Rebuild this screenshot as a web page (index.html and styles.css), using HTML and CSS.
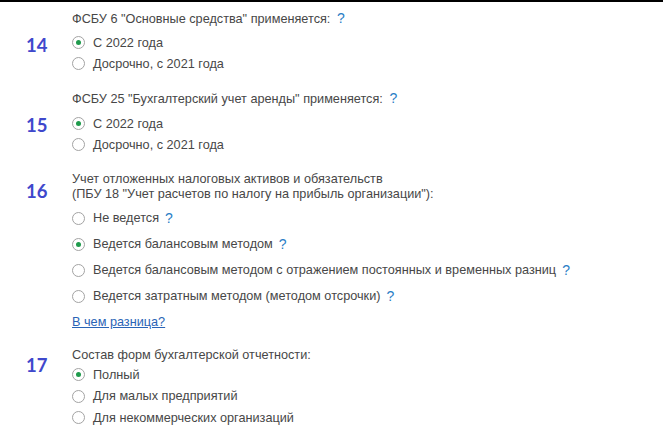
FILE: index.html
```html
<!DOCTYPE html>
<html lang="ru">
<head>
<meta charset="utf-8">
<link rel="stylesheet" href="styles.css">
</head>
<body>
<div class="page">
  <section class="sect s14">
    <div class="num">14</div>
    <div class="body">
      <div class="title">ФСБУ 6 "Основные средства" применяется: <span class="q">?</span></div>
      <div class="opts">
        <div class="opt"><span class="radio on"></span>С 2022 года</div>
        <div class="opt"><span class="radio"></span>Досрочно, с 2021 года</div>
      </div>
    </div>
  </section>
  <section class="sect s15">
    <div class="num">15</div>
    <div class="body">
      <div class="title">ФСБУ 25 "Бухгалтерский учет аренды" применяется: <span class="q">?</span></div>
      <div class="opts">
        <div class="opt"><span class="radio on"></span>С 2022 года</div>
        <div class="opt"><span class="radio"></span>Досрочно, с 2021 года</div>
      </div>
    </div>
  </section>
  <section class="sect s16">
    <div class="num">16</div>
    <div class="body">
      <div class="title two">Учет отложенных налоговых активов и обязательств<br>(ПБУ 18 "Учет расчетов по налогу на прибыль организации"):</div>
      <div class="opts wide">
        <div class="opt"><span class="radio"></span>Не ведется<span class="q">?</span></div>
        <div class="opt"><span class="radio on"></span>Ведется балансовым методом<span class="q">?</span></div>
        <div class="opt"><span class="radio"></span>Ведется балансовым методом с отражением постоянных и временных разниц<span class="q">?</span></div>
        <div class="opt"><span class="radio"></span>Ведется затратным методом (методом отсрочки)<span class="q">?</span></div>
      </div>
      <a class="link" href="#">В чем разница?</a>
    </div>
  </section>
  <section class="sect s17">
    <div class="num">17</div>
    <div class="body">
      <div class="title">Состав форм бухгалтерской отчетности:</div>
      <div class="opts">
        <div class="opt"><span class="radio on"></span>Полный</div>
        <div class="opt"><span class="radio"></span>Для малых предприятий</div>
        <div class="opt"><span class="radio"></span>Для некоммерческих организаций</div>
      </div>
    </div>
  </section>
</div>
</body>
</html>
```
FILE: styles.css
```css
html, body {
  margin: 0;
  padding: 0;
  background: #fff;
}
.page {
  width: 663px;
  height: 432px;
  border-top: 2px solid #000;
  font-family: "Liberation Sans", Arial, sans-serif;
  font-size: 12.7px;
  color: #474747;
  overflow: hidden;
}
.sect {
  display: flex;
}
.num {
  width: 46px;
  padding-left: 26px;
  font-family: Lato, "Open Sans", sans-serif;
  font-weight: 700;
  font-size: 18.5px;
  line-height: 20px;
  color: #3f48cc;
}
.body {
  display: flex;
  flex-direction: column;
}
.title {
  line-height: 16px;
}
.title.two {
  line-height: 15px;
}
.opts {
  display: flex;
  flex-direction: column;
}
.opt {
  display: flex;
  align-items: center;
  height: 21px;
  white-space: nowrap;
}
.opts.wide .opt {
  height: 26px;
}
.radio {
  box-sizing: border-box;
  width: 13px;
  height: 13px;
  border: 1px solid #a3a3a3;
  border-radius: 50%;
  margin-right: 8px;
  display: flex;
  align-items: center;
  justify-content: center;
  flex: none;
}
.radio.on::after {
  content: "";
  width: 5px;
  height: 5px;
  border-radius: 50%;
  background: #1f9a4c;
}
.q {
  color: #2a7ec6;
  font-size: 14px;
  margin-left: 3px;
}
.opt .q {
  margin-left: 6px;
}
.link {
  color: #2a64b6;
  text-decoration: underline;
  line-height: 16px;
  align-self: flex-start;
}

.s14 { padding-top: 8px; }
.s14 .num { margin-top: 25px; }
.s14 .opts { margin-top: 5px; }

.s15 { padding-top: 16px; }
.s15 .num { margin-top: 25px; }
.s15 .opts { margin-top: 6px; }

.s16 { padding-top: 17px; }
.s16 .num { margin-top: 9px; }
.s16 .opts { margin-top: 3px; }
.s16 .link { margin-top: 5px; }

.s17 { padding-top: 17px; }
.s17 .num { margin-top: 8px; }
.s17 .opts { margin-top: 1px; }
.s17 .opt { height: 21.5px; }
```
